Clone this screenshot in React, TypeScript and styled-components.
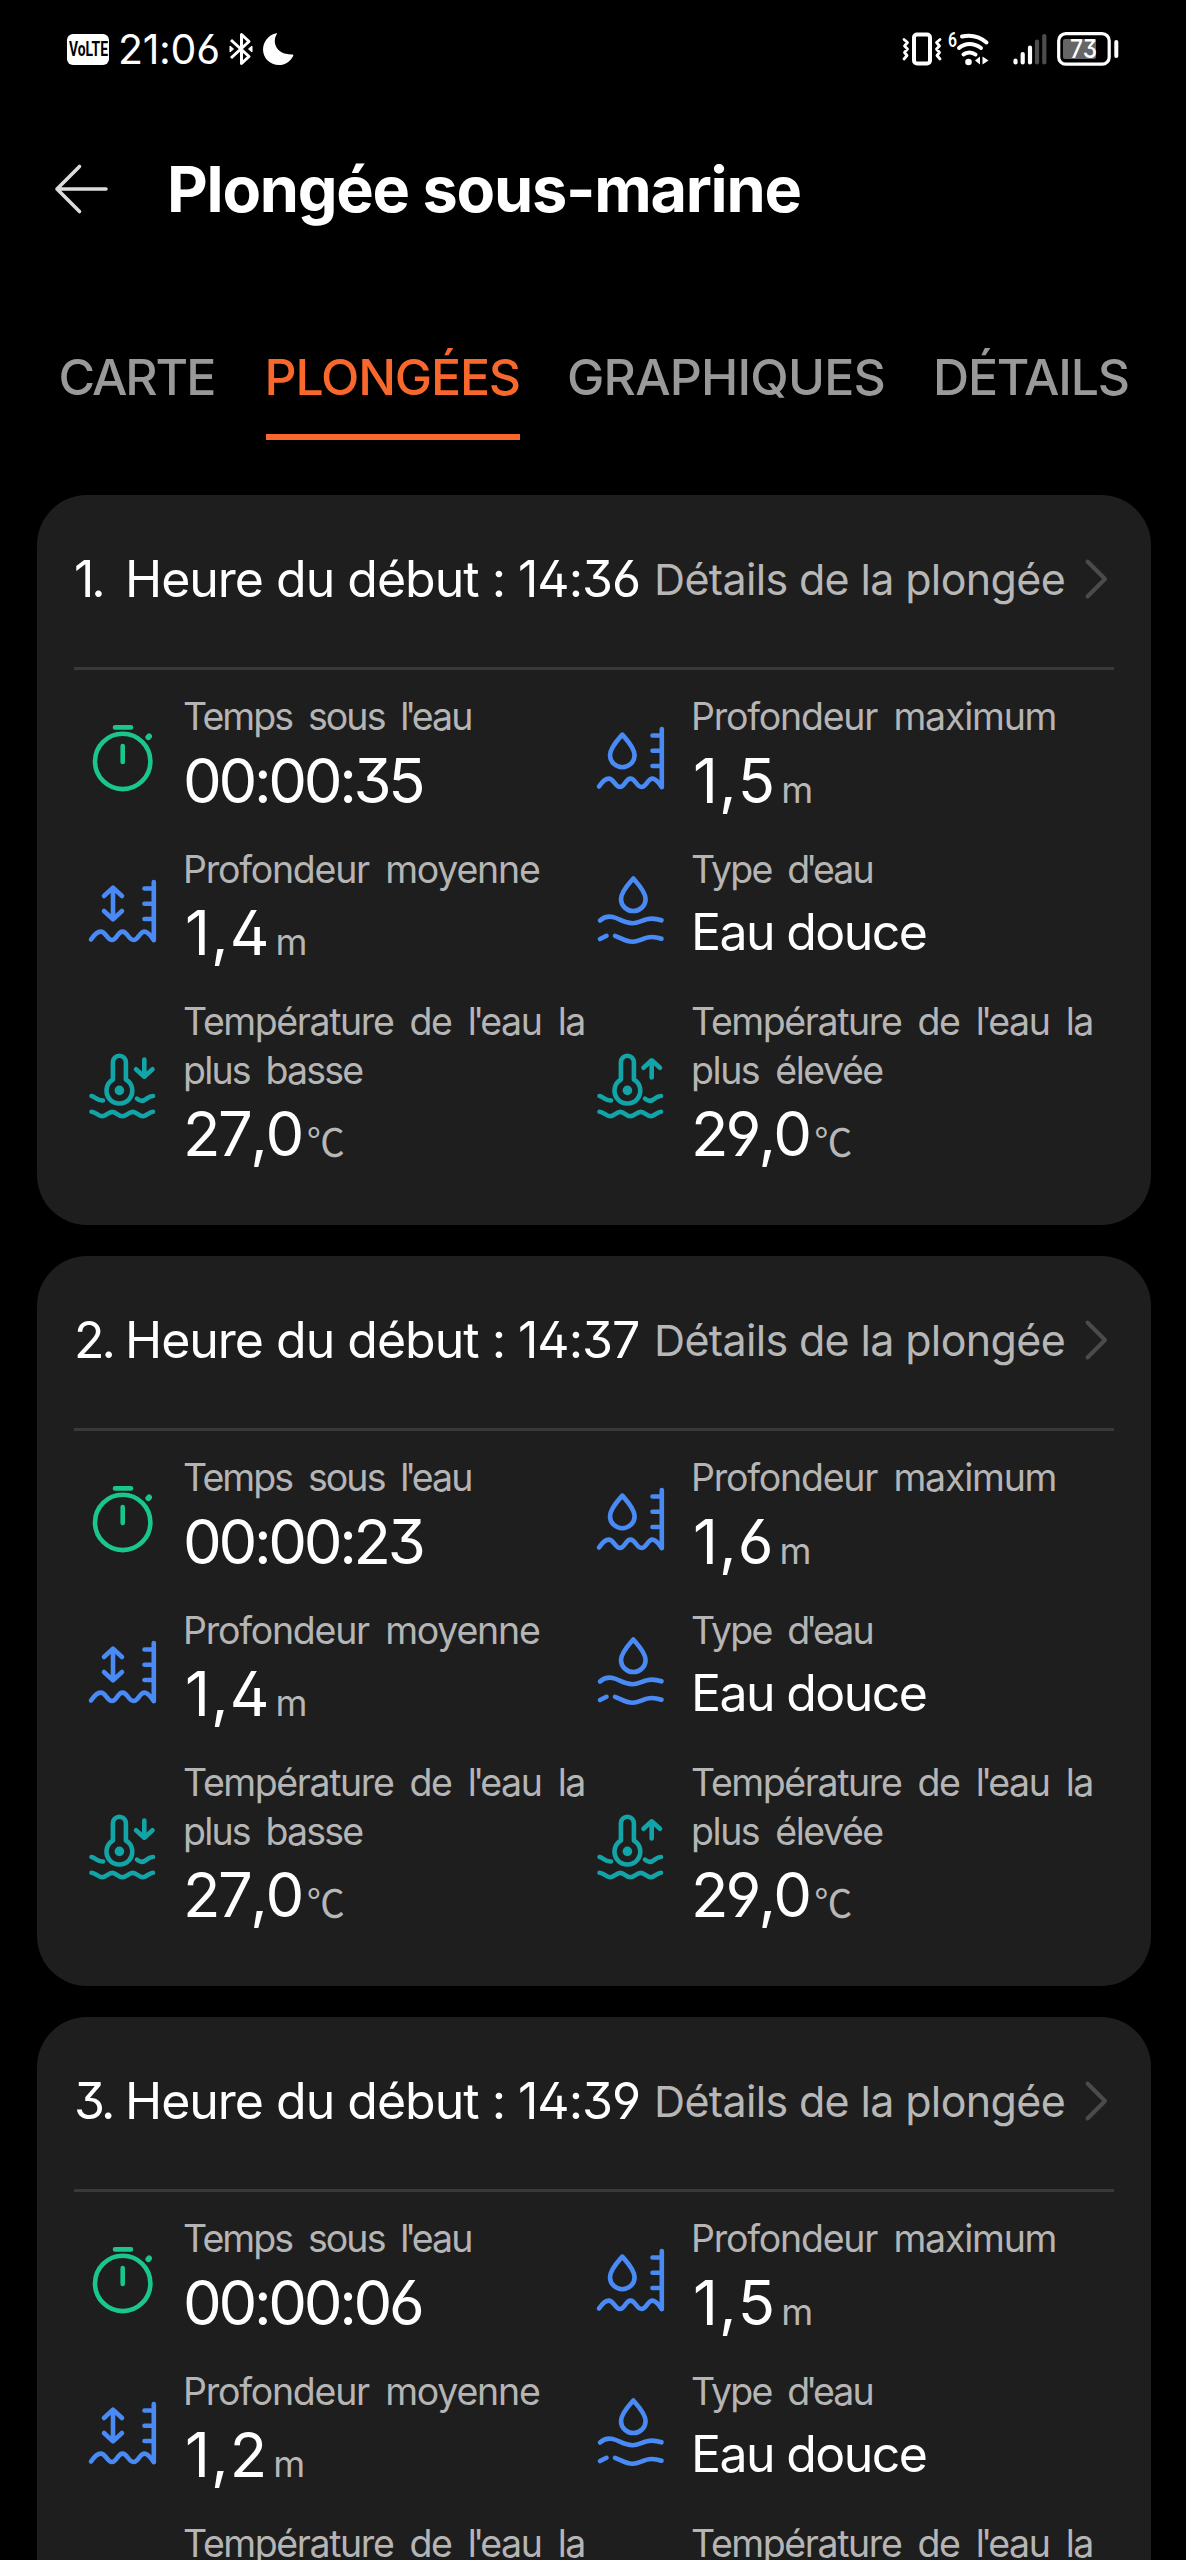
import React from "react";
import styled, { createGlobalStyle } from "styled-components";

const GlobalStyle = createGlobalStyle`
  * { box-sizing: border-box; }
  html, body { margin: 0; padding: 0; background: #000; }
  body {
    font-family: Inter, Roboto, "Liberation Sans", sans-serif;
    font-feature-settings: "ss01" 1, "cv03" 1, "cv04" 1;
  }
`;

const Screen = styled.div`
  width: 1186px;
  height: 2560px;
  overflow: hidden;
  background: #000;
  color: #fff;
`;

const StatusBar = styled.div`
  height: 100px;
  padding: 0 67px 2px 67px;
  display: flex;
  align-items: center;
  justify-content: space-between;
`;

const StatusGroup = styled.div`
  display: flex;
  align-items: center;
`;

const VolteBadge = styled.div`
  width: 42px;
  height: 31px;
  border-radius: 6px;
  background: #fff;
  color: #000;
  display: flex;
  align-items: center;
  justify-content: center;
  margin-right: 9px;
`;

const VolteText = styled.span`
  font: 700 21px/31px Roboto, sans-serif;
  transform: scaleX(0.66);
  flex: none;
`;

const Clock = styled.span`
  font-size: 41px;
  line-height: 50px;
  letter-spacing: -0.3px;
  width: 111px;
  white-space: nowrap;
`;

const StatusIcon = styled.svg<{ $gap?: number }>`
  display: block;
  flex: none;
  overflow: visible;
  margin-left: ${(p) => p.$gap ?? 0}px;
`;

const Header = styled.header`
  height: 178px;
  display: flex;
  align-items: center;
  padding-left: 54px;
`;

const Title = styled.h1`
  margin: 0 0 0 58px;
  font-size: 63px;
  font-weight: 700;
  line-height: 80px;
  letter-spacing: -1.25px;
  white-space: nowrap;
`;

const Tabs = styled.nav`
  display: flex;
  height: 216.5px;
  padding: 66px 0 0 59px;
`;

const Tab = styled.div<{ $active?: boolean; $width: number; $spacing: number; $indent: number }>`
  height: 96px;
  width: ${(p) => p.$width}px;
  margin-right: 50px;
  flex: none;
  padding-top: 3px;
  border-bottom: 6px solid ${(p) => (p.$active ? "#f8682c" : "transparent")};
  color: ${(p) => (p.$active ? "#f8682c" : "#999")};
  font-size: 50px;
  font-weight: 500;
  line-height: 60px;
  letter-spacing: ${(p) => p.$spacing}px;
  text-indent: ${(p) => p.$indent}px;
  white-space: nowrap;
`;

const Cards = styled.main`
  display: flex;
  flex-direction: column;
  gap: 31px;
  padding: 0 35px 0 37px;
`;

const Card = styled.section`
  height: 730px;
  flex: none;
  border-radius: 50px;
  background: #1e1e1e;
  padding: 0 37px;
`;

const CardHead = styled.div`
  height: 175px;
  border-bottom: 3px solid #393939;
  display: flex;
  align-items: center;
  padding-bottom: 4px;
`;

const StartTime = styled.div`
  display: grid;
  grid-template-columns: 51px 393px 136px;
  font-size: 50px;
  line-height: 60px;
  letter-spacing: -1px;
  white-space: nowrap;
  flex: none;
`;

const Index = styled.span`
  letter-spacing: -3px;
`;

const DetailsLink = styled.div`
  width: 430px;
  flex: none;
  font-size: 43px;
  line-height: 60px;
  letter-spacing: -0.65px;
  color: #b7b7b7;
  white-space: nowrap;
`;

const Metrics = styled.div`
  display: grid;
  grid-template-columns: 508px 508px;
  row-gap: 25.2px;
  padding: 22.6px 0 0 9px;
`;

const Metric = styled.div`
  display: flex;
  align-items: center;
  gap: 20px;
`;

const Label = styled.div`
  padding-top: 1px;
  margin-bottom: -1px;
`;

const LabelLine = styled.div<{ $spacing: number }>`
  font-size: 37.5px;
  line-height: 48.5px;
  color: #b5b5b5;
  letter-spacing: ${(p) => p.$spacing}px;
  word-spacing: 7px;
  white-space: nowrap;
`;

const Apostrophe = styled.span`
  margin: 0 -2.5px;
`;

const ValueLine = styled.div`
  height: 79px;
  display: flex;
  align-items: baseline;
  white-space: nowrap;
`;

const Value = styled.span<{ $text?: boolean; $spacing: number; $inset?: number }>`
  font-size: ${(p) => (p.$text ? 50 : 61.5)}px;
  line-height: 79px;
  letter-spacing: ${(p) => p.$spacing}px;
  margin-left: ${(p) => p.$inset ?? 0}px;
  font-kerning: ${(p) => (p.$text ? "auto" : "none")};
`;

const Unit = styled.span<{ $degree?: boolean }>`
  font-size: ${(p) => (p.$degree ? 38 : 36.5)}px;
  font-family: ${(p) => (p.$degree ? '"Noto Sans CJK SC", ' : "")}Inter, sans-serif;
  font-weight: 400;
  color: #b7b7b7;
  line-height: 50px;
  margin-left: 5px;
`;

const Glyph = styled.svg<{ $tone: string }>`
  width: 80px;
  height: 80px;
  flex: none;
  fill: none;
  stroke: ${(p) => p.$tone};
  stroke-width: 4.6;
  stroke-linecap: round;
  stroke-linejoin: round;
`;

const GREEN = "#1ac68c";
const BLUE = "#4a8af5";
const TEAL = "#12a4a6";

const Surface = () => (
  <>
    <path d="M8 70.6C11 66 14 62.6 17.7 62.6C23 62.6 24 71 28.9 71C34 71 34.5 62.6 39.5 62.6C44.500 62.600 45.500 71 50.600 71C55.500 71 56.500 62.600 61.500 62.600C65.500 62.600 67.500 67 70.800 71" />
    <path d="M70.800 13V71M61.500 19.500H70M61.500 34.700H70M61.500 50H70" />
  </>
);

const Thermometer = () => (
  <>
    <path d="M29.900 34.500V17.200a6.500 6.500 0 0 1 13 0V34.500a12.900 12.900 0 1 1-13 0Z" />
    <circle cx="36.400" cy="45.400" r="4.800" fill={TEAL} stroke="none" />
    <path d="M8.500 51C12.500 51.800 14.500 56 20 55.500M54 53.700C58 57.500 61.500 55.500 64 53.400C66 51.800 68 51 70 51" />
    <path d="M8.500 66.700C12.500 66.700 15 71.200 19 71.200C23 71.200 25.200 66.900 29.300 66.900C33.400 66.900 35.200 71.200 39.300 71.200C43.400 71.200 45.500 66.900 49.700 66.900C53.800 66.900 56 71.200 60 71.200C64 71.200 66 66.700 70 66.700" />
  </>
);

const icons = {
  time: (
    <Glyph $tone={GREEN} viewBox="0 0 80 80">
      <circle cx="39.700" cy="45.400" r="27.700" />
      <path d="M32 11.400H48M39.700 30V46" />
      <path d="M65.300 21.200l.8-.8" strokeWidth="5.800" />
    </Glyph>
  ),
  max: (
    <Glyph $tone={BLUE} viewBox="0 0 80 80">
      <path d="M31.300 18.600C28 22.500 19 31.500 19 39.200a12.300 12 0 0 0 24.600 0C43.600 31.500 34.600 22.500 31.300 18.600Z" />
      <Surface />
    </Glyph>
  ),
  avg: (
    <Glyph $tone={BLUE} viewBox="0 0 80 80">
      <path d="M30 19V50M21 27L30 18.600L39 27M21 42L30 50.400L39 42" />
      <Surface />
    </Glyph>
  ),
  water: (
    <Glyph $tone={BLUE} viewBox="0 0 80 80">
      <path d="M42.300 9.400C39 13.300 30 22.300 30 30a12.300 12 0 0 0 24.600 0C54.600 22.300 45.600 13.300 42.300 9.400Z" />
      <path d="M9 51.500C13 48 19 46.500 25 49C31 51.500 35 54.200 41.500 54.200C48 54.200 53 49.600 60.500 49.600C64.500 49.600 67.500 50.300 70.500 51.300" />
      <path d="M9 70L15.500 66.800M24 66.800C30 69 35 72.800 41.500 72.800C48 72.800 53 68 60.500 68C64.500 68 67.500 68.700 70.500 69.700" />
    </Glyph>
  ),
  low: (
    <Glyph $tone={TEAL} viewBox="0 0 80 80">
      <Thermometer />
      <path d="M61.300 14.500V31.500M53 24.300L61.300 31.700L69.500 24.300" />
    </Glyph>
  ),
  high: (
    <Glyph $tone={TEAL} viewBox="0 0 80 80">
      <Thermometer />
      <path d="M60.700 32.500V15.500M52.500 22.800L60.700 15.300L69 22.800" />
    </Glyph>
  ),
};

type Line = { text: string; spacing: number };

const labels: Record<keyof typeof icons, Line[]> = {
  time: [{ text: "Temps sous l'eau", spacing: -1.9 }],
  max: [{ text: "Profondeur maximum", spacing: -1.23 }],
  avg: [{ text: "Profondeur moyenne", spacing: -1.25 }],
  water: [{ text: "Type d'eau", spacing: -1.8 }],
  low: [
    { text: "Température de l'eau la", spacing: -1.4 },
    { text: "plus basse", spacing: -1.8 },
  ],
  high: [
    { text: "Température de l'eau la", spacing: -1.4 },
    { text: "plus élevée", spacing: -1.45 },
  ],
};

const withApostrophe = (text: string) => {
  const [before, after] = text.split("'");
  return after === undefined ? (
    before
  ) : (
    <>
      {before}
      <Apostrophe>'</Apostrophe>
      {after}
    </>
  );
};

type MetricProps = {
  icon: keyof typeof icons;
  value: string;
  spacing: number;
  inset?: number;
  unit?: string;
  text?: boolean;
};

const MetricCell = ({ icon, value, spacing, inset, unit, text }: MetricProps) => (
  <Metric>
    {icons[icon]}
    <div>
      <Label>
        {labels[icon].map((line) => (
          <LabelLine key={line.text} $spacing={line.spacing}>
            {withApostrophe(line.text)}
          </LabelLine>
        ))}
      </Label>
      <ValueLine>
        <Value $text={text} $spacing={spacing} $inset={inset}>
          {value}
        </Value>
        {unit && <Unit $degree={unit === "℃"}>{unit}</Unit>}
      </ValueLine>
    </div>
  </Metric>
);

const dives = [
  { start: "14:36", time: "00:00:35", max: "1,5", avg: "1,4" },
  { start: "14:37", time: "00:00:23", max: "1,6", avg: "1,4" },
  { start: "14:39", time: "00:00:06", max: "1,5", avg: "1,2" },
];

const tabs = [
  { name: "CARTE", width: 157, spacing: -2.1, indent: -0.5 },
  { name: "PLONGÉES", width: 254, spacing: -1.2, indent: -1.5 },
  { name: "GRAPHIQUES", width: 316, spacing: -0.8, indent: -3 },
  { name: "DÉTAILS", width: 195, spacing: -1.2, indent: -3 },
];

export default function App() {
  return (
    <Screen>
      <GlobalStyle />
      <StatusBar>
        <StatusGroup>
          <VolteBadge>
            <VolteText>VoLTE</VolteText>
          </VolteBadge>
          <Clock>21:06</Clock>
          <StatusIcon width="24" height="34" viewBox="0 0 24 34" fill="none" stroke="#fff" strokeWidth="3" strokeLinejoin="round">
            <path d="M2 8L20 24.500L12.500 31.500V2.500L20 9.500L2 26" />
            <path d="M1 14V20L4.500 17ZM23 14V20L19.500 17Z" fill="#fff" strokeWidth="1" />
          </StatusIcon>
          <StatusIcon $gap={10} width="31" height="33" viewBox="0 0 31 33" fill="#fff">
            <path d="M14 .8C9 8 12 22 29.500 21.500C30.500 21.500 30.500 22.500 30 23.200C27 29 22 32 16 32C7 32 0 25 0 16.500C0 8.500 5.500 2 12.500.4C13.800 .1 14.500 .2 14 .8Z" />
          </StatusIcon>
        </StatusGroup>
        <StatusGroup>
          <StatusIcon width="40" height="34" viewBox="0 0 40 34" fill="none" stroke="#fff" strokeLinejoin="round" strokeLinecap="round">
            <rect x="12" y="2.500" width="16" height="29" rx="3" strokeWidth="4" />
            <path d="M2 7.500L5.500 10.500L2.500 14L5.500 17L2.500 20.500L5 23.500L2 27M38 7.500L34.500 10.500L37.500 14L34.500 17L37.500 20.500L35 23.500L38 27" strokeWidth="2.800" />
          </StatusIcon>
          <StatusIcon $gap={6} width="42" height="34" viewBox="0 0 42 34" fill="none" stroke="#fff" strokeWidth="4" strokeLinecap="round">
            <text x="0" y="14.500" fontSize="20" fontWeight="600" fontFamily="Roboto, sans-serif" fill="#fff" stroke="none" textLength="9" lengthAdjust="spacingAndGlyphs">6</text>
            <path d="M14 4.500C23 2.500 32 5 38.500 10.500M11 16C17 10.500 26 10.500 33 16M15.500 22.500C18.500 19.700 24 19.700 27.500 22.500" />
            <circle cx="20.500" cy="30" r="3.300" fill="#fff" stroke="none" />
            <path d="M27 28.500L32 24.500V32.500ZM34.500 24.500L40.500 28.500L34.500 32.500Z" fill="#fff" stroke="none" />
          </StatusIcon>
          <StatusIcon $gap={23} width="34" height="34" viewBox="0 0 34 34" stroke="#fff" strokeWidth="4.200" strokeLinecap="round">
            <path d="M2.500 28.500V30.500M9.700 22V30.500M17 15.500V30.500" />
            <path d="M24 9.500V30.500M31.300 4V30.500" stroke="#4d4d4d" />
          </StatusIcon>
          <StatusIcon $gap={10} width="62" height="34" viewBox="0 0 62 34" fill="none" stroke="#fff">
            <rect x="1.700" y="1.700" width="50.500" height="30.500" rx="7" strokeWidth="3.200" />
            <rect x="6" y="7" width="33" height="20" rx="2" fill="#666" stroke="none" />
            <path d="M59.300 10V24" strokeWidth="4" strokeLinecap="round" />
            <text x="13" y="25.500" fontSize="26" fontWeight="500" fontFamily="Inter, sans-serif" fill="#fff" stroke="none" textLength="27" lengthAdjust="spacingAndGlyphs">73</text>
          </StatusIcon>
        </StatusGroup>
      </StatusBar>

      <Header>
        <StatusIcon width="55" height="50" viewBox="0 0 55 50" fill="none" stroke="#dcdcdc" strokeWidth="3.600" strokeLinecap="round" strokeLinejoin="round">
          <path d="M25.500 2.500L3 25L25.500 47.500M3 25H52" />
        </StatusIcon>
        <Title>Plongée sous-marine</Title>
      </Header>

      <Tabs>
        {tabs.map((t, i) => (
          <Tab key={t.name} $active={i === 1} $width={t.width} $spacing={t.spacing} $indent={t.indent}>
            {t.name}
          </Tab>
        ))}
      </Tabs>

      <Cards>
        {dives.map((d, i) => (
          <Card key={d.start}>
            <CardHead>
              <StartTime>
                <Index>{i + 1}.</Index>
                <span>Heure du début :</span>
                <span>{d.start}</span>
              </StartTime>
              <DetailsLink>Détails de la plongée</DetailsLink>
              <StatusIcon width="24" height="42" viewBox="0 0 24 42" fill="none" stroke="#4b4b4b" strokeWidth="4" strokeLinecap="round" strokeLinejoin="round">
                <path d="M3.500 3.500L21 21L3.500 38.500" />
              </StatusIcon>
            </CardHead>
            <Metrics>
              <MetricCell icon="time" value={d.time} spacing={-3.35} />
              <MetricCell icon="max" value={d.max} spacing={1} inset={2} unit="m" />
              <MetricCell icon="avg" value={d.avg} spacing={1} inset={2} unit="m" />
              <MetricCell icon="water" value="Eau douce" spacing={-1.6} text />
              <MetricCell icon="low" value="27,0" spacing={-2.5} unit="℃" />
              <MetricCell icon="high" value="29,0" spacing={-2.9} unit="℃" />
            </Metrics>
          </Card>
        ))}
      </Cards>
    </Screen>
  );
}
